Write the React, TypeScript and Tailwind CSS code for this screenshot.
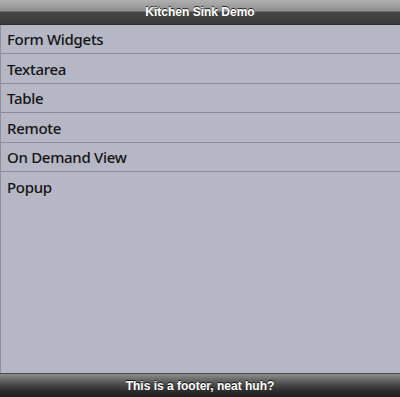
export default function App() {
  const items = ["Form Widgets", "Textarea", "Table", "Remote", "On Demand View", "Popup"];

  return (
    <div className="w-[400px] h-[397px] flex flex-col bg-[#b5b7c5] overflow-hidden">
      {/* Title bar */}
      <div className="h-[25px] shrink-0 flex items-center justify-center border-b border-[#2e2e2e] bg-[linear-gradient(to_bottom,#b0b0b0_0%,#8e8e8e_46%,#464646_50%,#3a3a3a_100%)]">
        <span className="text-white text-[12px] font-bold font-['Liberation_Sans',sans-serif] [text-shadow:0_-1px_0_#222]">
          Kitchen Sink Demo
        </span>
      </div>

      {/* List */}
      <div className="flex-1 border-l border-[#8f909c] font-['Noto_Sans',sans-serif]">
        {items.map((item, i) => (
          <div
            key={item}
            className={
              i < items.length - 1
                ? "h-[29.4px] flex items-center pl-[6px] pt-[1px] border-b border-[#8a8b97] text-[15px] tracking-[-0.3px] font-medium text-[#141414]"
                : "h-[29.4px] flex items-center pl-[6px] pt-[1px] text-[15px] tracking-[-0.3px] font-medium text-[#141414]"
            }
          >
            {item}
          </div>
        ))}
      </div>

      {/* Footer */}
      <div className="h-[24px] shrink-0 flex items-center justify-center border-t border-[#4a4a4a] bg-[linear-gradient(to_bottom,#8e8e8e_0%,#4a4a4a_45%,#2c2c2c_75%,#1c1c1c_100%)]">
        <span className="text-white text-[12px] font-bold font-['Liberation_Sans',sans-serif] [text-shadow:0_-1px_0_#111]">
          This is a footer, neat huh?
        </span>
      </div>
    </div>
  );
}
